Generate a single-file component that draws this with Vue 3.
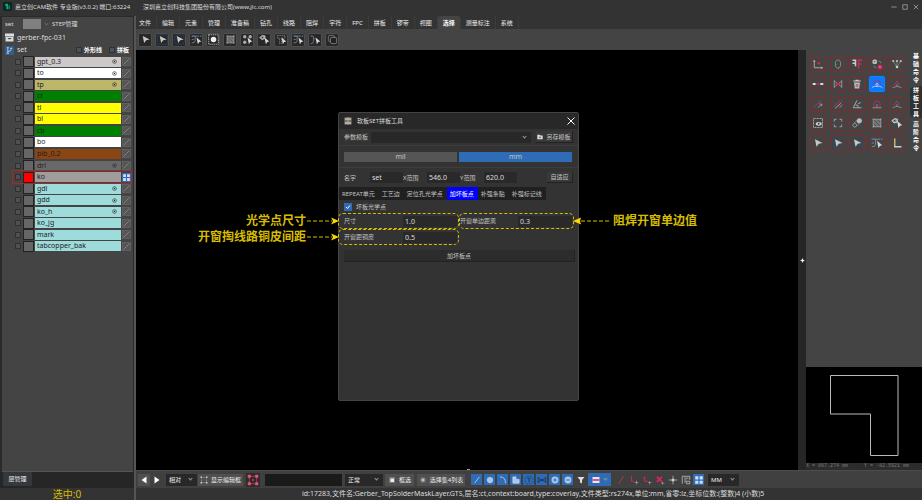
<!-- App.vue -->

<!-- main window of the CAM editor -->
<!-- left: layer list, middle: canvas with SET panel dialog, right: command icons + overview -->

<template>
  <div class="app">
    <header class="title-bar">
      <svg class="app-logo" viewBox="0 0 16 16">
        <rect width="16" height="16" rx="3" fill="#06281f" />
        <path d="M4 3h5v10H6V7H4zM10 6h2v7h-2z" fill="#19a57c" />
      </svg>
      <span class="app-name">嘉立创CAM软件 专业版(v3.0.2) 端口:63224</span>
      <span>深圳嘉立创科技集团股份有限公司(www.jlc.com)</span>
      <div class="window-buttons">
        <button aria-label="最小化"><svg viewBox="0 0 16 16"><path d="M1 8h14" /></svg></button>
        <button aria-label="最大化"><svg viewBox="0 0 16 16"><path d="M2 2h12v12H2z" /></svg></button>
        <button aria-label="关闭"><svg viewBox="0 0 16 16"><path d="M2 2l12 12M14 2L2 14" /></svg></button>
      </div>
    </header>

    <div class="body">
      <!-- layer list -->
      <aside class="side">
        <div class="layer-panel">
          <div class="step-row">
            <span class="step-name">set</span>
            <span class="step-color"></span>
            <span class="chevron dim"></span>
            <span class="step-title">STEP管理</span>
          </div>
          <div class="job-row">
            <svg class="job-icon" viewBox="0 0 16 16">
              <path d="M0 1h16v5H0zM1 7h14v8H1z" fill="#ddd" />
              <path d="M5 9h6v2H5z" fill="#444" />
            </svg>
            gerber-fpc-031
          </div>
          <div class="set-row">
            <svg class="set-icon" viewBox="0 0 16 16">
              <rect width="16" height="16" rx="2" fill="#315f8f" />
              <path d="M5 3v10M11 4v2q0 3-6 4M3 3h4M9 4h4M3 13h4" fill="none" stroke="#cde" stroke-width="1.4" />
            </svg>
            <span class="set-name">set</span>
            <label><input type="checkbox" class="box" /><b>外形线</b></label>
            <label><input type="checkbox" class="box" /><b>拼板</b></label>
          </div>
          <ul class="layers">
            <li v-for="layer in layers" :key="layer.name" :class="{ current: layer.name === 'ko' }">
              <input type="checkbox" class="box" :aria-label="layer.name" />
              <span class="swatch"></span>
              <span class="layer-name" :style="{ backgroundColor: layer.color }">
                {{ layer.name }}
                <svg v-if="layer.target" viewBox="0 0 16 16">
                  <circle cx="8" cy="8" r="6" fill="none" stroke="#333" stroke-width="2" />
                  <circle cx="8" cy="8" r="2.2" fill="#222" />
                </svg>
              </span>
              <svg class="layer-flag" viewBox="0 0 16 16">
                <template v-if="layer.name === 'ko'">
                  <rect width="16" height="16" fill="#2f6cb5" />
                  <path d="M2 2h5v5H2zM9 2h5v5H9zM2 9h5v5H2zM9 9h5v5H9z" fill="#cfe0f5" />
                </template>
                <template v-else>
                  <rect x="1" y="1" width="14" height="14" fill="#555" stroke="#707070" />
                  <path d="M3 13L13 3" stroke="#888" stroke-width="1.5" />
                </template>
              </svg>
            </li>
          </ul>
        </div>
        <div class="side-tabs"><button>层管理</button></div>
        <div class="selected">选中:0</div>
      </aside>

      <main class="main">
        <nav class="menu">
          <button v-for="item in menus" :key="item" :class="{ active: item === '选择' }">{{ item }}</button>
        </nav>
        <div class="toolbar">
          <button v-for="(name, i) in selectTools" :key="i" :aria-label="name">
            <svg viewBox="0 0 16 16" v-html="icons[name]"></svg>
          </button>
        </div>

        <div class="work">
          <section class="canvas">
            <div class="dialog" role="dialog" aria-label="软板SET拼板工具">
              <div class="dialog-head">
                <svg viewBox="0 0 16 16">
                  <path d="M1 1h14v14H1z" fill="#8d8a80" />
                  <path d="M2 4h4M10 4h4M2 12h4M10 12h4M8 1v14" stroke="#d8d2c0" stroke-width="2" />
                  <path d="M1 8h14" stroke="#55524a" stroke-width="1.5" />
                </svg>
                <h2>软板SET拼板工具</h2>
                <button aria-label="关闭"><svg viewBox="0 0 16 16"><path d="M1 1l14 14M15 1L1 15" /></svg></button>
              </div>

              <div class="template-row">
                <label for="template">参数模板</label>
                <span class="select"><select id="template"><option></option></select><i class="chevron"></i></span>
                <button class="raised">
                  <svg viewBox="0 0 16 16">
                    <path d="M1 2h6l2 2h6v10H1z" fill="#e4e4e4" />
                    <path d="M8 6v6M5 9h6" stroke="#444" stroke-width="1.5" />
                  </svg>
                  另存模板
                </button>
              </div>

              <div class="unit-row">
                <button v-for="u in ['mil', 'mm']" :key="u" :class="{ active: unit === u }" @click="unit = u">{{ u }}</button>
              </div>

              <div class="size-row">
                <label for="set-name">名字</label><input id="set-name" v-model="form.name" />
                <label for="range-x">X范围</label><input id="range-x" v-model="form.x" />
                <label for="range-y">Y范围</label><input id="range-y" v-model="form.y" />
                <button class="raised">自适应</button>
              </div>

              <div class="tabs">
                <button v-for="t in tabs" :key="t" :class="{ active: tab === t }" @click="tab = t">{{ t }}</button>
              </div>

              <label class="bad-board">
                <input type="checkbox" v-model="form.badBoard" />
                <svg viewBox="0 0 16 16"><path d="M4 8l3 3 5-6" /></svg>
                坏板光学点
              </label>

              <div class="fields">
                <div class="field">
                  <label for="mark-size">尺寸</label><input id="mark-size" v-model="form.size" />
                  <div class="note before">
                    光学点尺寸
                    <svg viewBox="0 0 32 8"><path class="line" d="M0 4h25" /><path d="M32 4l-8-3.5 2 3.5-2 3.5z" /></svg>
                  </div>
                </div>
                <div class="field">
                  <label for="mask-gap">开窗单边距离</label><input id="mask-gap" v-model="form.mask" />
                  <div class="note after">
                    <svg viewBox="0 0 38 8"><path class="line" d="M8 4h30" /><path d="M0 4l8-3.5-1 3.5 1 3.5z" /></svg>
                    阻焊开窗单边值
                  </div>
                </div>
                <div class="field">
                  <label for="copper-gap">开窗距铜皮</label><input id="copper-gap" v-model="form.copper" />
                  <div class="note before">
                    开窗掏线路铜皮间距
                    <svg viewBox="0 0 32 8"><path class="line" d="M0 4h25" /><path d="M32 4l-8-3.5 2 3.5-2 3.5z" /></svg>
                  </div>
                </div>
              </div>

              <button class="raised add-button">加坏板点</button>
            </div>
            <span class="handle"></span>
          </section>

          <div class="splitter"><svg viewBox="0 0 10 10"><path d="M5 0l1.5 3.5L10 5 6.5 6.5 5 10 3.5 6.5 0 5l3.5-1.5z" fill="#eee" /></svg></div>

          <aside class="commands">
            <div class="command-top">
              <div class="command-grid">
                <button v-for="(name, i) in commands" :key="i" :class="{ active: i === 8 }" :aria-label="name">
                  <svg viewBox="0 0 16 16" v-html="icons[name]"></svg>
                </button>
              </div>
              <div class="command-tabs">
                <button v-for="t in commandTabs" :key="t" :class="{ active: t === '拼板工具' }">{{ t }}</button>
              </div>
            </div>
            <svg class="overview" viewBox="0 0 116 96">
              <path d="M24.5 8.5h67.5v80h-27.5v-41.5h-40z" fill="none" stroke="#bbb" />
            </svg>
            <div class="coords"><span>X = 867.274 mm</span><span>Y = -82.5921 mm</span></div>
          </aside>
        </div>

        <div class="bottom-bar">
          <button class="step-button lit" aria-label="上一步"><svg viewBox="0 0 16 16"><path d="M13 1v14L3 8z" fill="#fff" /></svg></button>
          <button class="step-button" aria-label="下一步"><svg viewBox="0 0 16 16"><path d="M3 1v14l10-7z" fill="#fff" /></svg></button>
          <span class="select coord-mode"><select aria-label="坐标"><option>相对</option></select><i class="chevron"></i></span>
          <button class="flat edit-box"><svg viewBox="0 0 16 16" v-html="icons.frame"></svg>显示编辑框</button>
          <button class="red-box" aria-label="选框"><svg viewBox="0 0 16 16" v-html="icons.redFrame"></svg></button>
          <input class="command-input" aria-label="命令" />
          <span class="select snap-mode"><select aria-label="模式"><option>正常</option></select><i class="chevron"></i></span>
          <button class="flat pick"><svg viewBox="0 0 16 16" v-html="icons.pick"></svg>框选</button>
          <button class="flat pick-list"><svg viewBox="0 0 16 16" v-html="icons.dot"></svg>选择集4列表</button>
          <div class="filters">
            <button v-for="name in filters" :key="name" :aria-label="name"><svg viewBox="0 0 16 16" v-html="icons[name]"></svg></button>
          </div>
          <button class="plain" aria-label="过滤"><svg viewBox="0 0 16 16"><path d="M1 2h14l-5 6v7l-4-2V8z" fill="#ddd" /></svg></button>
          <button class="layer-mode" aria-label="显示">
            <svg viewBox="0 0 16 16"><path d="M1 2h14v12H1z" fill="#dfe8f4" /><path d="M1 8h14" stroke="#e0245e" stroke-width="3" /></svg>
            <i class="chevron"></i>
          </button>
          <div class="snaps">
            <button v-for="name in snaps" :key="name" :aria-label="name" :class="{ on: name === 'tiles' }"><svg viewBox="0 0 16 16" v-html="icons[name]"></svg></button>
          </div>
          <span class="select unit-mode"><select aria-label="单位"><option>MM</option></select><i class="chevron"></i></span>
        </div>
        <footer class="status">id:17283,文件名:Gerber_TopSolderMaskLayer.GTS,层名:ct,context:board,type:coverlay,文件类型:rs274x,单位:mm,省零:lz,坐标位数:(整数)4 (小数)5</footer>
      </main>
    </div>
  </div>
</template>

<script setup>
import { reactive, ref } from 'vue'

const unit = ref('mm')
const tab = ref('加坏板点')
const form = reactive({
  name: 'set',
  x: '546.0',
  y: '620.0',
  badBoard: true,
  size: '1.0',
  mask: '0.3',
  copper: '0.5'
})

const layers = [
  { name: 'gpt_0.3', color: '#cdc9c9', target: true },
  { name: 'to', color: '#ffffff', target: true },
  { name: 'tp', color: '#bdb76b', target: true },
  { name: 'ct', color: '#008000' },
  { name: 'tl', color: '#ffff00' },
  { name: 'bl', color: '#ffff00' },
  { name: 'cb', color: '#008000' },
  { name: 'bo', color: '#ffffff' },
  { name: 'pib_0.2', color: '#8b4513' },
  { name: 'drl', color: '#696969', target: true },
  { name: 'ko', color: '#a09c9c' },
  { name: 'gdl', color: '#9edcdc', target: true },
  { name: 'gdd', color: '#9edcdc', target: true },
  { name: 'ko_h', color: '#9edcdc', target: true },
  { name: 'ko_jg', color: '#9edcdc' },
  { name: 'mark', color: '#9edcdc' },
  { name: 'tabcopper_bak', color: '#9edcdc' }
]

const menus = ['文件', '编辑', '元素', '管理', '准备稿', '钻孔', '线路', '阻焊', '字符', 'FPC', '拼板', '锣带', '视图', '选择', '测量标注', '系统']
const tabs = ['REPEAT单元', '工艺边', '定位孔光学点', '加坏板点', '补强条贴', '补强标记线']
const commandTabs = ['基础命令', '拼板工具', '高阶命令']

const selectTools = ['arrow', 'arrowBox', 'arrowRound', 'net', 'spot', 'hatch', 'dots', 'link', 'path', 'net', 'net2', 'copy']
const commands = [
  'origin', 'loop', 'mirror', 'swap', 'fan',
  'extend', 'bowtie', 'trash', 'bridge', 'peak',
  'line', 'parallel', 'angle', 'dome', 'peak',
  'view', 'expand', 'pads', 'hatch', 'link',
  'arrow', 'arrowBox', 'arrowRound', 'net', 'corner'
]
const filters = ['fLine', 'fPad', 'fArc', 'fSurface', 'fText', 'fNet', 'fPlus', 'fMinus']
const snaps = ['sLine', 'sCorner', 'sCorner2', 'sCross', 'sCenter', 'sGrid', 'tiles']

// --- Icon shapes, all on a 16 x 16 box --- //

const cursor = '<path d="M4 3l10 5-5 1-3 4z" fill="#c8c8c8"/>'
const smallCursor = '<path d="M8 5l7 6-3 .5L10 15z" fill="#d8d8d8"/>'

const icons = {
  arrow: cursor,
  arrowBox: '<path d="M1 1h14v14H1z" fill="none" stroke="#28486f"/>' + cursor,
  arrowRound: '<rect x="1" y="1" width="14" height="14" rx="5" fill="none" stroke="#28486f"/>' + cursor,
  net: '<path d="M1 3h11M6 3v7q0 3-5 3M1 8h3" fill="none" stroke="#999"/><path d="M1 3h4M13 3h2" stroke="#3b7bc4" stroke-width="2"/>' + smallCursor,
  net2: '<path d="M5 3v8q0 3-4 3M5 7h3" fill="none" stroke="#888"/><path d="M1 3h3" stroke="#3b7bc4" stroke-width="2"/>' + smallCursor,
  spot: '<rect x="1" y="1" width="14" height="14" fill="none" stroke="#aaa" stroke-width="1.5" stroke-dasharray="2 1"/><circle cx="8" cy="8" r="4" fill="#eee"/>',
  hatch: '<path d="M3 3h10v10H3z" fill="#777"/><path d="M3 3l10 10M8 3l5 5M3 8l5 5" stroke="#444"/><path d="M3 2v12M13 2v12M2 3h12M2 13h12" stroke="#aaa"/>',
  dots: '<circle cx="4" cy="4" r="2.5" fill="#aaa"/><circle cx="12" cy="4" r="2.5" fill="#aaa"/><circle cx="4" cy="12" r="2.5" fill="#aaa"/>' + smallCursor,
  link: '<path d="M1 5l4-3 4 1-1 4-4 1z" fill="#999" stroke="#ddd"/><circle cx="5" cy="5" r="1" fill="#333"/>' + smallCursor,
  path: '<path d="M2 2h11v4H8v8H5V6H2z" fill="none" stroke="#999" stroke-dasharray="2 1"/>' + smallCursor,
  copy: '<rect x="2" y="2" width="9" height="9" rx="2" fill="none" stroke="#888"/><rect x="5" y="5" width="9" height="9" rx="2" fill="#222" stroke="#999"/>',
  origin: '<path d="M3 3v10h11M2 5l1-2 1 2M12 12l2 1-2 1" fill="none" stroke="#aaa" stroke-width="1.3"/><circle cx="9" cy="7" r="1.8" fill="#d6245c"/>',
  loop: '<ellipse cx="8" cy="8" rx="3.5" ry="5.5" fill="none" stroke="#999"/><path d="M4 10l2-2M10 13l-2 1" stroke="#888"/>',
  mirror: '<path d="M2 3h5M2 7h4M6 3v8" stroke="#ccc" stroke-width="2" fill="none"/><path d="M10 14V3h5M10 8h4" stroke="#d6245c" stroke-width="2" fill="none"/>',
  swap: '<rect x="2" y="2" width="6" height="6" rx="2" fill="#bbb"/><path d="M4 5h2" stroke="#444"/><rect x="9" y="9" width="6" height="6" rx="2" fill="#d6245c"/><path d="M11 12h2" stroke="#ddd"/><path d="M10 4q3 0 3 3M4 10q0 3 3 3" fill="none" stroke="#888"/>',
  fan: '<path d="M3 4l5 8 5-8M8 4v8" fill="none" stroke="#888"/><circle cx="3" cy="4" r="1.5" fill="#bbb"/><circle cx="8" cy="4" r="1.5" fill="#bbb"/><circle cx="13" cy="4" r="1.5" fill="#bbb"/><circle cx="8" cy="12" r="1.8" fill="#ccc"/>',
  extend: '<path d="M1 8h4M11 8h4" stroke="#ddd" stroke-width="2.5"/><path d="M5 8h6" stroke="#d6245c" stroke-width="1.5"/>',
  bowtie: '<path d="M3 3v10M13 3v10M3 4l5 4 5-4M3 12l5-4 5 4" fill="none" stroke="#aaa"/><path d="M5 8h6" stroke="#d6245c" stroke-width="3"/>',
  trash: '<path d="M3 4h10M6 3h4" stroke="#ccc" stroke-width="1.5"/><path d="M4 6h8l-1 8H5z" fill="#bbb"/><path d="M7 8v4M9 8v4" stroke="#d6245c"/>',
  bridge: '<path d="M4 11V6q0-3 4-3t4 3v5" fill="none" stroke="#d6245c"/><path d="M1 13l3-2h8l3 2M8 7v5M6 9l2-2 2 2" fill="none" stroke="#cfe0ff"/>',
  peak: '<path d="M4 10l4-6 4 6" fill="none" stroke="#c22a58" stroke-width="1.3"/><path d="M2 13q6-4 12 0M8 8v4" fill="none" stroke="#999"/>',
  line: '<path d="M2 13L12 3" stroke="#d6245c" stroke-width="1.3"/><path d="M8 13l5-5M10 8h3v3" fill="none" stroke="#aaa"/>',
  parallel: '<path d="M2 12l9-9M6 12l8-8" stroke="#c22a58" stroke-width="1.3"/><path d="M4 14l8-7M10 13l4-4" stroke="#aaa"/>',
  angle: '<path d="M8 3L3 13h11M6 9q4 0 4 4M9 8l4-2" fill="none" stroke="#aaa" stroke-width="1.3"/>',
  dome: '<path d="M4 12V7q0-3 4-3t4 3v5" fill="none" stroke="#c22a58" stroke-width="1.3"/><path d="M2 13h12M8 8v4" stroke="#aaa"/>',
  view: '<rect x="2" y="2" width="12" height="12" fill="none" stroke="#bbb" stroke-dasharray="3 1"/><ellipse cx="9" cy="9" rx="4" ry="2.5" fill="#ccc"/><circle cx="9" cy="9" r="1.2" fill="#444"/>',
  expand: '<path d="M3 6V3h3M10 3h3v3M3 10v3h3M10 13h3v-3" fill="none" stroke="#bbb"/>',
  pads: '<circle cx="11" cy="5" r="3.5" fill="#bbb"/><circle cx="5" cy="11" r="2.5" fill="none" stroke="#aaa"/><path d="M4 8l5-5M8 12l5-5" stroke="#888"/>',
  corner: '<path d="M5 2v10" stroke="#c9b264" stroke-width="2"/><path d="M4 13h10" stroke="#ccc" stroke-width="2"/>',
  frame: '<rect x="3" y="3" width="10" height="10" fill="none" stroke="#bbb" stroke-dasharray="2 1"/><path d="M1 1h3v3H1zM12 1h3v3h-3zM1 12h3v3H1zM12 12h3v3h-3z" fill="#ccc"/>',
  redFrame: '<rect x="3" y="3" width="10" height="10" fill="none" stroke="#c33a60"/><path d="M1 1h4v4H1zM11 1h4v4h-4zM1 11h4v4H1zM11 11h4v4h-4zM7 7h2v2H7z" fill="#f05078"/>',
  pick: '<rect x="2" y="2" width="12" height="12" fill="#777"/><rect x="5" y="5" width="7" height="7" fill="#eee"/>',
  dot: '<rect x="3" y="3" width="10" height="10" fill="#777"/><path d="M5 8h6M8 5v6" stroke="#ddd" stroke-width="2"/>',
  fLine: '<path d="M4 13l8-10" stroke="#bcd6f2" stroke-width="1.3"/>',
  fPad: '<circle cx="8" cy="8" r="5" fill="#a9c8ea"/>',
  fArc: '<path d="M3 3q9 0 9 10" fill="none" stroke="#bcd6f2" stroke-width="1.3"/>',
  fSurface: '<path d="M3 3h5v4h5v6H3z" fill="#a9c8ea" stroke="#d4e4f6"/>',
  fText: '<rect x="2" y="2" width="12" height="12" rx="3" fill="none" stroke="#163a66" stroke-dasharray="3 2"/><path d="M5 5h6M8 5v7" stroke="#163a66" stroke-width="1.5"/>',
  fNet: '<path d="M2 3v10M14 3v10M2 5l12 6M2 11l12-6M5 8h6" stroke="#163a66" stroke-width="1.5"/>',
  fPlus: '<circle cx="8" cy="8" r="5.5" fill="#a9c8ea"/><path d="M5 8h6M8 5v6" stroke="#2f6cb5" stroke-width="1.5"/>',
  fMinus: '<circle cx="8" cy="8" r="5.5" fill="#a9c8ea"/><path d="M5 8h6" stroke="#2f6cb5" stroke-width="1.5"/>',
  sLine: '<path d="M4 14L12 2" stroke="#c9385e" stroke-width="1.3"/>',
  sCorner: '<path d="M4 2v8h4" fill="none" stroke="#d6245c" stroke-width="1.5"/><path d="M9 12h6M12 9v6" stroke="#aaa"/>',
  sCorner2: '<path d="M4 3v7h6M2 5l4-2" fill="none" stroke="#d6245c" stroke-width="1.5"/><path d="M10 12h5M12 10v5" stroke="#aaa"/>',
  sCross: '<path d="M3 3l8 8M11 3l-8 8" stroke="#e0245e" stroke-width="2.5"/><path d="M10 13h5M12 11v4" stroke="#aaa"/>',
  sCenter: '<path d="M8 1v14M1 8h14" stroke="#ccc"/><circle cx="8" cy="8" r="2.5" fill="#ccc"/>',
  sGrid: '<path d="M2 14V2h12v6M5 5h7M5 8h4M5 11h3M9 10h5v4H9z" fill="none" stroke="#bbb" stroke-width="1.3"/>',
  tiles: '<path d="M2 2h5v5H2zM9 2h5v5H9zM2 9h5v5H2zM9 9h5v5H9z" fill="#cfe0f5"/>'
}
</script>

<style>
body {
  background: #000;
}
</style>

<style scoped>
.app {
  display: flex;
  flex-direction: column;
  height: 100vh;
  overflow: hidden;
  background: #333;
  color: #ddd;
  font-family: "Noto Sans", "Noto Sans CJK SC", sans-serif;
  font-size: 6px;
  line-height: 10px;
}

.app * {
  box-sizing: border-box;
}

button,
input,
select {
  margin: 0;
  padding: 0;
  border: 0;
  border-radius: 0;
  background: none;
  color: inherit;
  font: inherit;
}

button {
  display: flex;
  align-items: center;
  justify-content: center;
  white-space: nowrap;
}

input,
select {
  appearance: none;
  min-width: 0;
  outline: 0;
}

svg {
  display: block;
  flex: none;
}

/* title bar */
.title-bar {
  display: flex;
  align-items: center;
  height: 16px;
  padding: 0 3px 3px;
  white-space: nowrap;
}

.app-logo {
  width: 9px;
  height: 9px;
  margin-right: 3px;
}

.app-name {
  width: 128px;
}

.window-buttons {
  display: flex;
  gap: 5px;
  margin-left: auto;
}

.window-buttons svg {
  width: 6px;
  height: 6px;
  fill: none;
  stroke: #aaa;
  stroke-width: 2;
}

.body {
  display: grid;
  grid-template-columns: 136px minmax(0, 1fr);
  flex: 1;
  min-height: 0;
}

/* left side */
.side {
  display: flex;
  flex-direction: column;
  border-right: 2px solid #555;
  background: #2a2a2a;
}

.layer-panel {
  flex: 1;
  margin: 1px 1px 0 2px;
  border-bottom: 1px solid #555;
  background: #444;
  font-size: 7px;
}

.step-row,
.job-row,
.set-row {
  display: flex;
  align-items: center;
  padding-left: 3px;
}

.step-row {
  height: 14px;
  font-size: 6px;
}

.step-name {
  width: 18px;
}

.step-color {
  width: 18px;
  height: 10px;
  margin-right: 4px;
  background: #808080;
}

.step-title {
  margin-left: 4px;
}

.job-row {
  height: 13px;
  gap: 3px;
}

.job-icon,
.set-icon {
  width: 9px;
  height: 9px;
}

.set-row {
  height: 12px;
  gap: 3px;
}

.set-name {
  flex: 1;
}

.set-row label {
  display: flex;
  align-items: center;
  gap: 2px;
  margin-right: 4px;
  font-size: 6px;
  color: #fff;
}

.box {
  width: 6px;
  height: 6px;
  border: 1px solid #303030;
  background: #505050;
}

.layers {
  display: grid;
  grid-auto-rows: 1fr;
  height: 196px;
  margin: 0;
  padding: 0 2px 0 11px;
  list-style: none;
}

.layers li {
  display: flex;
  align-items: center;
  padding-left: 2px;
}

.layers .current {
  position: relative;
  outline: 1px solid #a32a2a;
}

.swatch {
  width: 11px;
  height: 11px;
  margin: 0 1px 0 2px;
  border: 1px solid #222;
  background: #666;
}

.current .swatch {
  background: #f00;
}

.layer-name {
  display: flex;
  align-items: center;
  justify-content: space-between;
  flex: 1;
  height: 10px;
  padding: 0 4px 0 2px;
  color: #222;
}

.layer-name svg {
  width: 5px;
  height: 5px;
}

.layer-flag {
  width: 9px;
  height: 9px;
  margin-left: 1px;
}

.side-tabs {
  display: flex;
  height: 16px;
  padding: 0 3px 2px;
  background: #262626;
}

.side-tabs button {
  width: 29px;
  background: #34383c;
  color: #eee;
}

.selected {
  height: 12px;
  background: #333;
  color: #d6bd00;
  font-size: 10px;
  line-height: 12px;
  text-align: center;
}

/* menu + toolbar */
.main {
  display: flex;
  flex-direction: column;
  min-width: 0;
}

.menu {
  display: flex;
  height: 13px;
  color: #eee;
}

.menu button {
  padding: 0 5px;
  border-right: 1px solid #3c3c3c;
}

.menu button:first-child {
  padding-left: 3px;
}

.menu .active {
  border-radius: 3px 3px 0 0;
  background: #444;
  color: #fff;
  font-weight: bold;
}

.toolbar {
  display: flex;
  align-items: center;
  gap: 3px;
  height: 21px;
  padding: 0 2px;
  background: #444;
}

.toolbar button {
  width: 14px;
  height: 14px;
  border: 1px solid #4e4e4e;
  border-radius: 2px;
  background: #282828;
}

.toolbar svg {
  width: 11px;
  height: 11px;
}

.work {
  display: grid;
  grid-template-columns: minmax(0, 1fr) 8px 116px;
  flex: 1;
  min-height: 0;
}

.canvas {
  position: relative;
  background: #000;
}

.handle {
  position: absolute;
  bottom: 0;
  left: 50%;
  width: 3px;
  height: 1px;
  background: #999;
}

.splitter {
  display: flex;
  align-items: center;
  justify-content: center;
  background: #262626;
}

.splitter svg {
  width: 5px;
  height: 5px;
}

/* dialog */
.dialog {
  position: absolute;
  top: 62px;
  left: 202px;
  width: 241px;
  height: 289px;
  border: 1px solid #444;
  border-radius: 2px;
  background: #333;
  color: #c4c4c4;
}

.dialog-head {
  display: flex;
  align-items: center;
  height: 16px;
  padding: 0 3px 0 5px;
  background: #282828;
}

.dialog-head > svg {
  width: 8px;
  height: 8px;
}

.dialog-head h2 {
  flex: 1;
  margin: 0 0 0 5px;
  font-size: 6px;
  font-weight: normal;
  color: #ddd;
}

.dialog-head button svg {
  width: 8px;
  height: 8px;
  fill: none;
  stroke: #fff;
  stroke-width: 2;
}

.dialog input {
  height: 11px;
  background: #292929;
  color: #ddd;
  font-size: 7px;
}

.raised {
  border-right: 1px solid #222;
  border-bottom: 1px solid #222;
  background: #383838;
}

.select {
  display: flex;
  align-items: center;
  height: 12px;
  padding: 0 5px 0 3px;
  background: #282828;
}

.select select {
  flex: 1;
  height: 100%;
}

.chevron {
  width: 3px;
  height: 3px;
  margin-top: -2px;
  border: solid #999;
  border-width: 0 1px 1px 0;
  transform: rotate(45deg);
}

.chevron.dim {
  border-color: #666;
}

.template-row {
  display: flex;
  align-items: center;
  height: 17px;
  padding: 0 5px;
  border-bottom: 1px solid #3d3d3d;
}

.template-row label {
  width: 27px;
}

.template-row .select {
  flex: 1;
  height: 11px;
}

.template-row button {
  gap: 3px;
  width: 37px;
  height: 12px;
  margin-left: 5px;
}

.template-row button svg {
  width: 6px;
  height: 6px;
}

.unit-row {
  display: grid;
  grid-template-columns: 1fr 1fr;
  gap: 2px;
  height: 22px;
  padding: 6px 6px 5px 5px;
  border-bottom: 1px solid #3d3d3d;
}

.unit-row button {
  background: #555;
  font-size: 7px;
}

.unit-row .active {
  background: #2f6cb5;
}

.size-row {
  display: flex;
  align-items: center;
  height: 19px;
  padding: 0 5px;
}

.size-row label {
  width: 24px;
}

.size-row input {
  width: 33px;
  padding-left: 2px;
}

.size-row label:first-child {
  width: 26px;
}

.size-row button {
  width: 26px;
  height: 11px;
  margin-left: auto;
}

.tabs {
  display: flex;
  width: max-content;
  height: 13px;
  background: #202020;
}

.tabs button {
  padding: 0 4px 0 3px;
}

.tabs .active {
  background: #00f;
  color: #fff;
}

.bad-board {
  display: flex;
  align-items: center;
  height: 13px;
  margin-left: 5px;
}

.bad-board input {
  width: 8px;
  height: 8px;
  background: #2f6cb5;
}

.bad-board svg {
  width: 8px;
  height: 8px;
  margin: 0 4px 0 -8px;
  fill: none;
  stroke: #fff;
  stroke-width: 2;
}

.fields {
  display: grid;
  grid-template-columns: 121px 115px;
  margin-left: -1px;
}

.field {
  position: relative;
  display: grid;
  grid-template-columns: 1fr 54px;
  align-items: center;
  height: 16px;
  padding: 0 1px 0 5px;
  border: 1px dashed #d6bd00;
  border-radius: 5px;
}

.field:nth-child(2) {
  padding-left: 0;
}

.field input {
  padding-left: 2px;
}

.note {
  position: absolute;
  top: 0;
  display: flex;
  align-items: center;
  gap: 1px;
  height: 14px;
  color: #d6bd00;
  font-size: 12px;
  font-weight: bold;
  white-space: nowrap;
}

.note.before {
  right: 100%;
}

.note.after {
  left: 100%;
  gap: 2px;
}

.note svg {
  width: 32px;
  height: 8px;
  fill: #ffd800;
}

.note.after svg {
  width: 38px;
}

.note .line {
  stroke: #d6bd00;
  stroke-dasharray: 4 2;
}

.add-button {
  width: 231px;
  height: 12px;
  margin: 5px 0 0 5px;
  background: #2c2c2c;
}

/* right side */
.commands {
  display: flex;
  flex-direction: column;
  background: #444;
}

.command-top {
  display: flex;
  flex: 1;
}

.command-grid {
  display: grid;
  grid-template-columns: repeat(5, 16px);
  grid-template-rows: repeat(5, 16px);
  align-content: space-between;
  justify-content: space-between;
  width: 95px;
  height: 95px;
  margin: 6px 5px 0 4px;
}

.command-grid button {
  border: 1px solid #7e2d2d;
  border-radius: 2px;
}

.command-grid .active {
  border-color: #1a80ff;
  background: #0a78ff;
}

.command-grid svg {
  width: 12px;
  height: 12px;
}

.command-tabs {
  display: flex;
  flex: 1;
  flex-direction: column;
  gap: 2px;
  padding-top: 2px;
}

.command-tabs button {
  height: 32px;
  padding: 0 3px;
  color: #fff;
  font-weight: bold;
  line-height: 8px;
  white-space: normal;
  word-break: break-all;
}

.command-tabs .active {
  border-radius: 5px 0 0 5px;
  background: #303030;
}

.overview {
  width: 100%;
  height: 96px;
  background: #000;
}

.coords {
  display: grid;
  grid-template-columns: 1fr 1fr;
  height: 7px;
  background: #2c2c2c;
  color: #777;
  font-family: "Liberation Mono", monospace;
  font-size: 5px;
  line-height: 7px;
}

/* bottom */
.bottom-bar {
  display: flex;
  align-items: center;
  height: 18px;
  padding: 0 2px;
  border-top: 1px solid #4c4c4c;
  background: #404040;
  color: #eee;
}

.bottom-bar svg {
  width: 8px;
  height: 8px;
}

.step-button {
  width: 12px;
  height: 12px;
  margin-right: 1px;
}

.step-button.lit {
  background: #505050;
}

.coord-mode {
  width: 31px;
  margin: 0 1px 0 2px;
}

.flat {
  gap: 3px;
  height: 12px;
  background: #505050;
}

.edit-box {
  width: 45px;
}

.red-box {
  width: 14px;
  height: 14px;
  margin: 0 5px 0 3px;
  background: #2c2c2c;
}

.bottom-bar .red-box svg {
  width: 12px;
  height: 12px;
}

.command-input {
  width: 77px;
  height: 12px;
  background: #1a1a18;
}

.snap-mode {
  width: 38px;
  margin: 0 2px 0 3px;
}

.pick {
  width: 29px;
}

.pick-list {
  width: 48px;
  margin: 0 6px 0 3px;
}

.filters {
  display: flex;
  gap: 2px;
}

.filters button,
.snaps button {
  width: 11px;
  height: 11px;
}

.filters button {
  background: #2f6cb5;
}

.filters svg,
.snaps svg {
  width: 10px;
  height: 10px;
}

.plain {
  width: 15px;
}

.layer-mode {
  gap: 4px;
  width: 23px;
  height: 13px;
  background: #2f6cb5;
}

.snaps {
  display: flex;
  gap: 2px;
  margin: 0 4px;
}

.snaps .on {
  background: #2f6cb5;
}

.unit-mode {
  width: 31px;
}

.status {
  height: 12px;
  padding-left: 166px;
  background: #333;
  font-size: 7px;
  line-height: 11px;
  white-space: nowrap;
}
</style>
